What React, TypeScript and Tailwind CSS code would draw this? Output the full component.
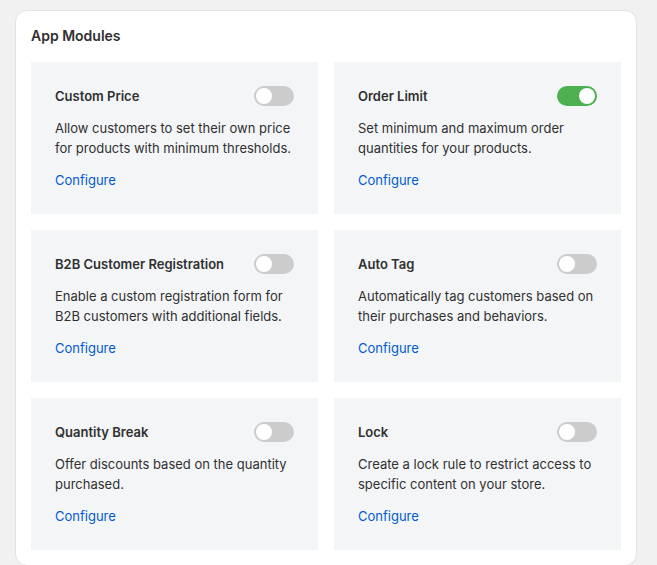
import { useState } from "react";

type Module = {
  title: string;
  description: string;
  enabled: boolean;
};

const modules: Module[] = [
  {
    title: "Custom Price",
    description: "Allow customers to set their own price for products with minimum thresholds.",
    enabled: false,
  },
  {
    title: "Order Limit",
    description: "Set minimum and maximum order quantities for your products.",
    enabled: true,
  },
  {
    title: "B2B Customer Registration",
    description: "Enable a custom registration form for B2B customers with additional fields.",
    enabled: false,
  },
  {
    title: "Auto Tag",
    description: "Automatically tag customers based on their purchases and behaviors.",
    enabled: false,
  },
  {
    title: "Quantity Break",
    description: "Offer discounts based on the quantity purchased.",
    enabled: false,
  },
  {
    title: "Lock",
    description: "Create a lock rule to restrict access to specific content on your store.",
    enabled: false,
  },
];

function Toggle({ on, onChange }: { on: boolean; onChange: () => void }) {
  return (
    <button
      type="button"
      onClick={onChange}
      className={
        on
          ? "relative h-5 w-10 shrink-0 rounded-full bg-[#4caf50]"
          : "relative h-5 w-10 shrink-0 rounded-full bg-[#cccccc]"
      }
    >
      <span
        className={
          on
            ? "absolute top-[2px] left-[22px] size-4 rounded-full bg-white"
            : "absolute top-[2px] left-[2px] size-4 rounded-full bg-white"
        }
      />
    </button>
  );
}

function ModuleTile({ mod }: { mod: Module }) {
  const [on, setOn] = useState(mod.enabled);
  return (
    <div className="bg-[#f4f5f7] p-6">
      <div className="flex items-center justify-between">
        <h3 className="text-[13px] leading-5 font-semibold text-[#303030]">{mod.title}</h3>
        <Toggle on={on} onChange={() => setOn(!on)} />
      </div>
      <p className="mt-3 text-[13px] leading-5 text-[#303030]">{mod.description}</p>
      <a href="#" className="mt-3 block text-[13px] leading-5 text-[#005bd3]">
        Configure
      </a>
    </div>
  );
}

export default function App() {
  return (
    <div
      className="min-h-screen bg-[#f1f1f1] pl-[15px] pr-[20px] pt-[10px] pb-4"
      style={{ fontFamily: "Inter, 'Noto Sans', sans-serif" }}
    >
      <div className="rounded-xl border border-[#e3e3e3] bg-white px-[15px] pt-[15px] pb-[15px]">
        <h2 className="text-sm leading-5 font-semibold text-[#303030]">App Modules</h2>
        <div className="mt-4 grid grid-cols-2 gap-4">
          {modules.map((m) => (
            <ModuleTile key={m.title} mod={m} />
          ))}
        </div>
      </div>
    </div>
  );
}
